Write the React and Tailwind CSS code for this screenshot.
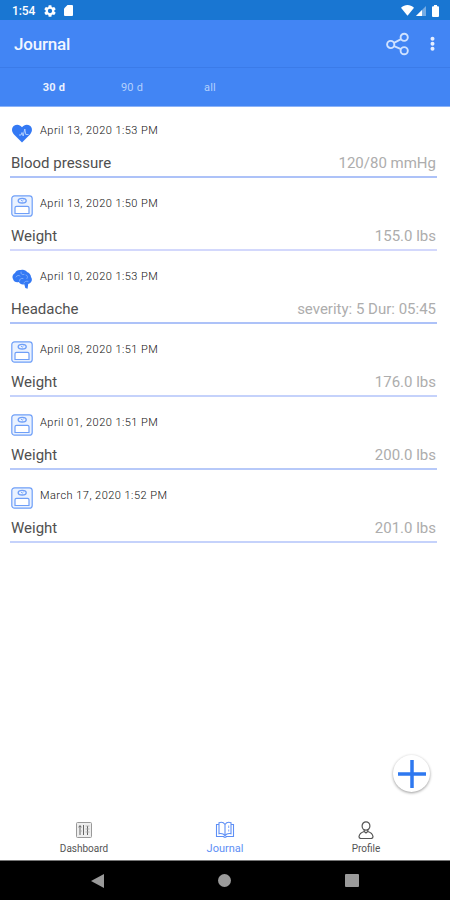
import React from 'react';

const entries = [
  { type: 'heart', date: 'April 13, 2020 1:53 PM', name: 'Blood pressure', value: '120/80 mmHg', line: 'border-[#adc2f8]' },
  { type: 'scale', date: 'April 13, 2020 1:50 PM', name: 'Weight', value: '155.0 lbs', line: 'border-[#d3d8fc]' },
  { type: 'brain', date: 'April 10, 2020 1:53 PM', name: 'Headache', value: 'severity: 5 Dur: 05:45', line: 'border-[#adc2f8]' },
  { type: 'scale', date: 'April 08, 2020 1:51 PM', name: 'Weight', value: '176.0 lbs', line: 'border-[#c5d2fb]' },
  { type: 'scale', date: 'April 01, 2020 1:51 PM', name: 'Weight', value: '200.0 lbs', line: 'border-[#b7c9f9]' },
  { type: 'scale', date: 'March 17, 2020 1:52 PM', name: 'Weight', value: '201.0 lbs', line: 'border-[#c5d2fb]' },
];

function HeartIcon() {
  return (
    <svg className="w-[22px] h-[22px]" viewBox="0 0 22 22" fill="none">
      <path d="M11 20.5 3 12.500C.3 9.600.5 5.600 3 3.800 5.700 1.900 9 2.600 11 5.200 13 2.600 16.300 1.900 19 3.800c2.500 1.800 2.700 5.800 0 8.700z" fill="#3479f4" />
      <path d="M8 13h2l1-2.500 1.200 3.500 1.600-7 1 5.500h2.700" stroke="#b9d5ff" strokeWidth=".9" strokeLinejoin="round" />
    </svg>
  );
}

function ScaleIcon() {
  return (
    <svg className="w-[22px] h-[22px]" viewBox="0 0 22 22" fill="none" stroke="#6f9ff8">
      <rect x=".8" y=".8" width="20.400" height="20.400" rx="2.800" fill="#eaf2ff" strokeWidth="1.200" />
      <ellipse cx="11.200" cy="5.700" rx="4" ry="2.300" strokeWidth="1.400" />
      <path d="m10 5 1.200 1.200L12.500 5" strokeWidth=".9" />
      <path d="M4 18.500v-5.700q0-1.500 1.500-1.500h11q1.500 0 1.500 1.500v5.700z" fill="#fff" strokeWidth="1.200" />
    </svg>
  );
}

function BrainIcon() {
  return (
    <svg className="w-[22px] h-[22px]" viewBox="0 0 22 22" fill="none">
      <path d="M2 11C.8 8.500 2 6 4 5c.8-2.200 3.500-3.500 6-2.900 2.500-.8 5 .3 6 2 2.300.7 4 2.900 4 5 1.700 2.300.8 5.500-1.600 6.300L17.200 16l-.6 4.700-2.300-.7-1-3.800c-2.200.7-4.600-.2-5.400-2.200-2.600.9-5.100-.3-5.900-3z" fill="#3479f4" />
      <path d="M5 9c1-2 3-2 4-1m1-4c-.5 2 1 3 3 2.500M8.500 13c0-2 1.500-3 3.500-2.500m3-3.500c1.500.3 2 1.800 1 3.500m-3 4.500c.5-1.500 2-2 4-1.700" stroke="#8ab6fb" strokeWidth=".8" strokeLinecap="round" />
    </svg>
  );
}

const icons = { heart: HeartIcon, scale: ScaleIcon, brain: BrainIcon };

function StatusBar() {
  return (
    <div className="h-5 bg-[#1976d2] flex items-center pl-3 pr-[9px] pt-px text-white">
      <span className="w-[38px] -mr-[6px] text-[12px] leading-none font-medium tracking-[-0.1px]">1:54</span>
      <svg className="w-3 h-3" viewBox="2 2 20 20" fill="currentColor">
        <path d="M19.140 12.940c.04-.3.060-.61.060-.94s-.02-.64-.07-.94l2.030-1.580a.49.490 0 0 0 .12-.61l-1.920-3.320a.49.490 0 0 0-.59-.22l-2.390.96c-.5-.38-1.030-.7-1.620-.94L14.400 2.810A.48.480 0 0 0 13.920 2.400h-3.840a.48.480 0 0 0-.47.41L9.250 5.350c-.59.24-1.130.57-1.620.94l-2.390-.96a.49.490 0 0 0-.59.220L2.740 8.870a.48.480 0 0 0 .12.610l2.030 1.580c-.05.3-.09.630-.09.940s.02.640.07.940l-2.010 1.580a.49.490 0 0 0-.12.610l1.920 3.320c.12.220.370.290.590.220l2.390-.96c.5.380 1.030.7 1.620.94l.36 2.540c.05.240.240.410.480.410h3.840c.24 0 .44-.17.470-.41l.36-2.540c.59-.24 1.130-.56 1.620-.94l2.390.96c.22.080.470 0 .590-.22l1.920-3.320a.48.480 0 0 0-.12-.61zM12 15.600a3.600 3.600 0 1 1 0-7.200 3.600 3.600 0 0 1 0 7.200z" />
      </svg>
      <svg className="w-[9px] h-[11px] ml-[8px]" viewBox="0 0 9 11" fill="currentColor">
        <path d="M3.500 0H8q1 0 1 1v9q0 1-1 1H1q-1 0-1-1V3.500z" />
      </svg>
      <svg className="w-[13px] h-[11px] ml-auto" viewBox="0 0 13 11" fill="currentColor">
        <path d="M0 2.800C4-.8 9-.8 13 2.800L6.500 10.800z" />
      </svg>
      <svg className="w-[10px] h-[10px] ml-[2px]" viewBox="0 0 10 10" fill="currentColor">
        <path d="M10 0v10H0z" opacity=".4" />
        <path d="M6 4v6H0z" />
      </svg>
      <svg className="w-[7px] h-3 ml-[6px] mr-[2px]" viewBox="0 0 7 12" fill="currentColor">
        <path d="M2 0h3v1.200h1q1 0 1 1V11q0 1-1 1H1q-1 0-1-1V2.200q0-1 1-1h1z" />
      </svg>
    </div>
  );
}

function Header() {
  return (
    <div className="bg-[#4285f4]">
      <div className="h-12 flex items-center pl-[14px] pr-[13px] border-b border-[#3b7be8]">
        <h1 className="pt-[3px] text-[17px] font-medium text-[#f2f6ff] tracking-[-0.2px]">Journal</h1>
        <svg className="w-6 h-6 ml-auto" viewBox="0 0 24 24" fill="none" stroke="#cfe2ff" strokeWidth="1.900">
          <circle cx="4.700" cy="12.500" r="3.600" />
          <circle cx="18.200" cy="5.300" r="3.600" />
          <circle cx="18.200" cy="18.700" r="3.600" />
          <path d="m8 10.800 7-3.700m-7 7 7 3" />
        </svg>
        <svg className="w-[5px] h-[15px] ml-[20px] mr-[2px]" viewBox="0 0 5 15" fill="#e5eeff">
          <circle cx="2.500" cy="2.800" r="2" />
          <circle cx="2.500" cy="7.700" r="2" />
          <circle cx="2.500" cy="12.700" r="2" />
        </svg>
      </div>
      <div className="h-[38px] flex items-center pl-[15px] pt-[3px] text-[11px] tracking-[0.2px] text-[#b3d0fd]">
        <span className="w-[78px] text-center font-bold text-[#eaf1ff]">30 d</span>
        <span className="w-[78px] text-center">90 d</span>
        <span className="w-[78px] text-center">all</span>
      </div>
      <div className="h-px bg-[#8bb3f8]" />
    </div>
  );
}

function Entry({ entry }) {
  const Icon = icons[entry.type];
  return (
    <li className={`h-14 border-b-2 ${entry.line}`}>
      <div className="flex h-[22px] pl-px">
        <Icon />
        <span className="ml-[7px] pt-[2px] text-[11px] leading-[14px] font-light text-[#111] tracking-[0.47px]">{entry.date}</span>
      </div>
      <div className="flex justify-between mt-[9px] pl-px pr-px text-[15px] leading-5">
        <span className="text-[#505050]">{entry.name}</span>
        <span className="text-[#adadad]">{entry.value}</span>
      </div>
    </li>
  );
}

function TabBar() {
  return (
    <div className="h-[47px] flex justify-center pt-[7px] text-[10px] leading-3 text-[#555] border-b border-[#777]">
      <div className="w-[141px] flex flex-col items-center">
        <svg className="w-[18px] h-[18px]" viewBox="0 0 18 18" fill="none" stroke="#777">
          <rect x="1.500" y="1.500" width="15" height="15" rx="1" fill="#eee" stroke="#999" />
          <path d="M5 14V5M3.700 6.300 5 4.500l1.300 1.800M8.500 4v10M12.500 5v9" stroke="#666" />
          <path d="M10.500 5h4M10.500 8h4M10.500 11h4M4 10h3" strokeWidth=".8" stroke="#aaa" />
        </svg>
        <span className="mt-[4px]">Dashboard</span>
      </div>
      <div className="w-[141px] flex flex-col items-center text-[#5e8ff5]">
        <svg className="w-5 h-[18px]" viewBox="0 0 20 18" fill="none" stroke="currentColor" strokeWidth="1.100">
          <path d="M10 3.500C8.500 1.200 6 1 4 1.700v11c2.500-.6 4.500 0 6 2 1.500-2 3.500-2.600 6-2v-11c-2-.7-4.500-.5-6 1.800zV14.500" />
          <path d="M4 3.500H1.500v12h7q1.500 1.500 3 0h7v-12H16" />
          <path d="M13.700 10.500v-2m0-1.500V4.500" strokeWidth=".8" />
        </svg>
        <span className="mt-[4px] text-[11px]">Journal</span>
      </div>
      <div className="w-[141px] flex flex-col items-center">
        <svg className="w-[18px] h-[18px]" viewBox="0 0 18 18" fill="none" stroke="#555" strokeWidth="1.200">
          <ellipse cx="9" cy="5" rx="3.900" ry="4.200" />
          <path d="M7.200 8.500v2C4.500 11.300 2.500 12.500 2 15.500q0 2 2 2h10q2 0 2-2c-.5-3-2.500-4.200-5.200-5v-2M7.200 10.500 9 12l1.800-1.500" />
        </svg>
        <span className="mt-[4px]">Profile</span>
      </div>
    </div>
  );
}

function SystemNav() {
  return (
    <div className="h-[39px] bg-black flex items-center justify-between pl-[91px] pr-[91px]">
      <svg className="w-[13px] h-[14px]" viewBox="0 0 13 14" fill="#9a9a9a">
        <path d="M0 7 13 0v14z" />
      </svg>
      <div className="w-[13px] h-[13px] rounded-full bg-[#9a9a9a]" />
      <div className="w-[14px] h-[13px] rounded-[1px] bg-[#9a9a9a]" />
    </div>
  );
}

function App() {
  return (
    <div className="w-[450px] h-[900px] flex flex-col bg-white font-['Roboto',sans-serif] overflow-hidden relative">
      <StatusBar />
      <Header />
      <ul className="flex-1 flex flex-col gap-[17px] pt-[15px] pl-[10px] pr-[13px]">
        {entries.map((entry) => (
          <Entry key={entry.date} entry={entry} />
        ))}
      </ul>
      <button className="absolute right-5 bottom-[108px] w-[37px] h-[37px] rounded-full bg-white shadow-[0_1px_3px_rgba(0,0,0,0.4)] flex items-center justify-center">
        <svg className="w-7 h-7" viewBox="0 0 28 28" stroke="#2e78f0" strokeWidth="3.500">
          <path d="M14 0v28M0 14h28" />
        </svg>
      </button>
      <TabBar />
      <SystemNav />
    </div>
  );
}

export default App;
